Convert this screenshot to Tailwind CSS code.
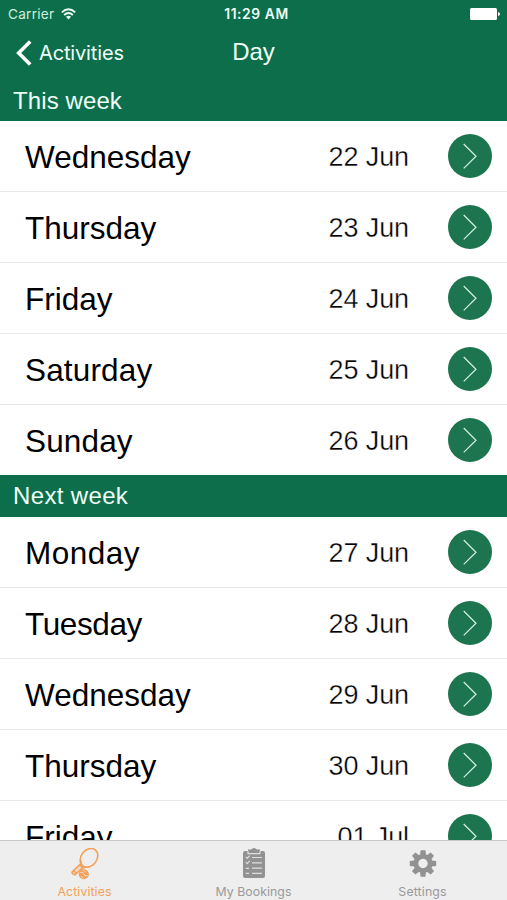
<!DOCTYPE html>
<html lang="en">
<head>
<meta charset="utf-8">
<meta name="viewport" content="width=device-width, initial-scale=1">
<title>Day</title>
<script src="https://cdn.jsdelivr.net/npm/@tailwindcss/browser@4"></script>
</head>
<body class="bg-white">
<div class="relative flex h-[900px] w-[507px] flex-col overflow-hidden bg-white font-['Liberation_Sans',Arial,sans-serif] text-black">
  <header class="shrink-0 bg-[#0d6e4b] text-[#effff7]">
    <div class="grid h-[28px] grid-cols-3 items-center pl-[8px] pr-[7px] font-['Inter',sans-serif]">
      <div class="flex items-center gap-[7px]">
        <span class="pt-[1px] text-[13.6px] tracking-[0.25px] text-[#cdeedd]">Carrier</span>
        <svg class="h-[12px] w-[15px]" viewBox="0 0 15 12" fill="none" stroke="currentColor" stroke-width="1.8"><path d="M.8 4.3Q7.5-1.7 14.2 4.3M3.1 7Q7.5 3 11.9 7"/><path d="M5 8.8Q7.5 6.8 10 8.8L7.5 11.4Z" fill="currentColor" stroke="none"/></svg>
      </div>
      <span class="whitespace-nowrap pl-[5px] text-center text-[13.8px] font-semibold tracking-[0.6px]">11:29 AM</span>
      <svg class="h-[12px] w-[30px] justify-self-end" viewBox="0 0 30 12" fill="#fff"><rect x="0" y="0" width="27" height="12" rx="1.5"/><path d="M28 4Q30 4.3 30 6T28 8Z"/></svg>
    </div>
    <nav class="grid h-[52px] grid-cols-3 items-center">
      <div class="flex items-center gap-[7px] pb-[2px] pl-[16px]">
        <svg class="h-[26px] w-[16px]" viewBox="0 0 16 26" fill="none" stroke="#fff" stroke-width="3.6"><path d="M14.2 1.5L2.7 13l11.5 11.5"/></svg>
        <span class="font-['Inter',sans-serif] text-[20px] tracking-[-0.15px]">Activities</span>
      </div>
      <h1 class="pb-[5px] text-center text-[24px]">Day</h1>
    </nav>
    <h2 class="flex h-[41px] items-center pl-[13px] text-[24px] tracking-[0.1px]">This week</h2>
  </header>
  <main class="flex-1 overflow-hidden">
    <ul id="this-week"></ul>
    <h2 class="-mt-px flex h-[42px] items-center bg-[#0d6e4b] pl-[13px] text-[24px] tracking-[0.35px] text-[#effff7]">Next week</h2>
    <ul id="next-week"></ul>
  </main>
  <footer class="grid h-[60px] shrink-0 grid-cols-3 border-t border-[#c8c8c8] bg-[#eeeeee] font-['Inter',sans-serif] text-[12.3px] leading-[16px] text-[#999]">
    <div class="flex flex-col items-center pt-[7px] text-[#f3a158]">
      <svg class="h-[32px] w-[28px]" viewBox="0 0 28 32" fill="none" stroke="currentColor" stroke-width="1.6"><ellipse cx="18" cy="9.8" rx="7.9" ry="10.1" transform="rotate(38 18 9.8)"/><path d="M10.2 12.5L9.2 17.6M15.6 18.8L11.4 20.2"/><path d="M8.6 16.8L1.3 23.7Q.7 24.5 1.4 25.2L3 26.7Q3.7 27.2 4.4 26.5L11.7 19.7Z" fill="#f3a158" fill-opacity=".25"/><path d="M2.6 22.6L5.8 25.5"/><circle cx="12.8" cy="26.2" r="5" fill="currentColor" stroke="none"/><path d="M9.3 24.5l2.5-.2 2 3.5 2.7-.2M13 22.5l2 2M10.2 28.3l2 1.8" stroke="#eee" stroke-width=".8"/></svg>
      <span class="mt-[4px] tracking-[0.1px]">Activities</span>
    </div>
    <div class="flex flex-col items-center pt-[7px]">
      <svg class="h-[32px] w-[22px]" viewBox="0 0 22 32" fill="#929292"><path d="M2 3H5V1.5H8Q11-1.5 14 1.5H17V3H20Q22 3 22 5V28Q22 30 20 30H2Q0 30 0 28V5Q0 3 2 3Z"/><path d="M5 3V5.7H17V3M9 9.5H19M9 14.8H19M9 20.1H19M9 25.4H19M2.8 8.9L4.2 10.4 6.7 7.6M2.8 14.2L4.2 15.7 6.7 12.9M2.8 20.3H6M2.8 25.4H6" fill="none" stroke="#dedede" stroke-width="1.2"/></svg>
      <span class="mt-[4px] tracking-[0.05px]">My Bookings</span>
    </div>
    <div class="flex flex-col items-center pt-[7px]">
      <svg class="h-[32px] w-[28px]" viewBox="0 0 28 32"><g transform="translate(14 15.5)" fill="#929292"><circle r="9.6"/><path id="tooth" d="M-3-8.5L-2.4-13.2H2.4L3-8.5V8.5L2.4 13.2H-2.4L-3 8.5Z"/><use href="#tooth" transform="rotate(45)"/><use href="#tooth" transform="rotate(90)"/><use href="#tooth" transform="rotate(135)"/><circle r="4.7" fill="#eee"/></g></svg>
      <span class="mt-[4px] tracking-[0.15px]">Settings</span>
    </div>
  </footer>
</div>
<template id="day-row">
  <li class="flex h-[71px] items-center border-b border-[#e9e9e9] pl-[25px] pr-[15px]">
    <span data-day class="flex-1 pb-px pt-[2px] text-[31.5px] leading-[36px]"></span>
    <span data-date class="mr-[39px] pb-px pt-[2px] text-[27px] leading-[36px] tracking-[-0.1px] text-black [-webkit-text-stroke:0.35px_white]"></span>
    <svg class="h-[44px] w-[44px]" viewBox="0 0 44 44"><circle cx="22" cy="22" r="22" fill="#1c754e"/><path d="M15.7 10L28 22.2 15.7 34.4" fill="none" stroke="#d5f2e2" stroke-width="1.2"/></svg>
  </li>
</template>
<script>
const weeks = {
  'this-week': [['Wednesday','22 Jun'],['Thursday','23 Jun'],['Friday','24 Jun'],['Saturday','25 Jun'],['Sunday','26 Jun']],
  'next-week': [['Monday','27 Jun'],['Tuesday','28 Jun'],['Wednesday','29 Jun'],['Thursday','30 Jun'],['Friday','01 Jul']]
};
const tracking = { Monday: 'tracking-[0.5px]', Tuesday: 'tracking-[-0.4px]', Saturday: 'tracking-[0.15px]', Sunday: 'tracking-[0.15px]' };
const template = document.getElementById('day-row');
for (const [id, days] of Object.entries(weeks)) {
  for (const [day, date] of days) {
    const row = template.content.cloneNode(true);
    const label = row.querySelector('[data-day]');
    label.textContent = day;
    if (tracking[day]) label.classList.add(tracking[day]);
    row.querySelector('[data-date]').textContent = date;
    document.getElementById(id).append(row);
  }
}
</script>
</body>
</html>
